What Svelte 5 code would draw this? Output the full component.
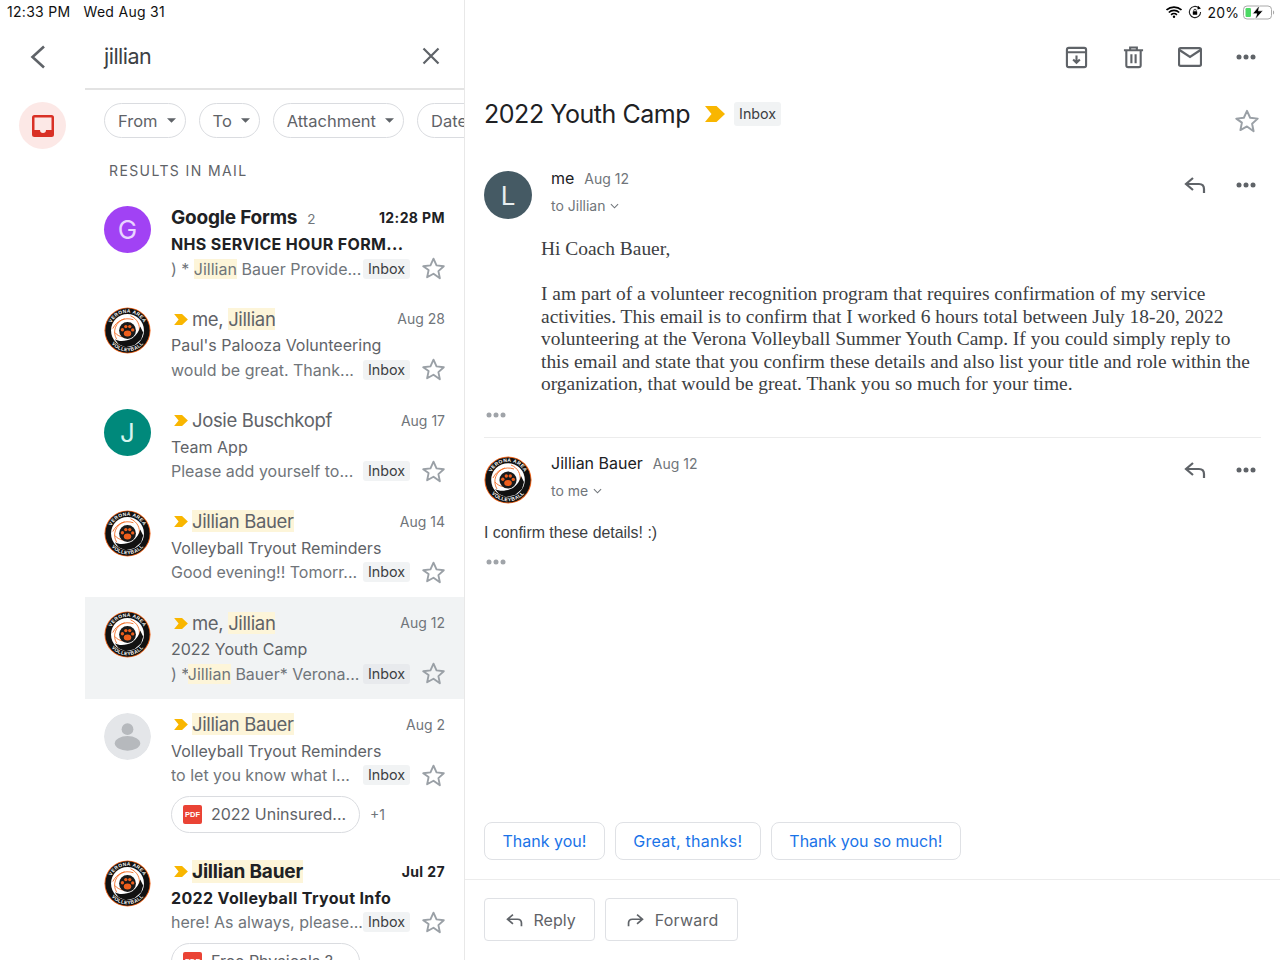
<script>
  const rows = [
    { av: 'g', name: [['Google Forms', 0]], count: '2', date: '12:28 PM', subj: 'NHS SERVICE HOUR FORM...', snip: [[') * ', 0], ['Jillian', 1], [' Bauer Provide...', 0]], bold: true },
    { av: 'logo', imp: true, name: [['me, ', 0], ['Jillian', 1]], date: 'Aug 28', subj: "Paul's Palooza Volunteering", snip: [['would be great. Thank...', 0]] },
    { av: 'j', imp: true, name: [['Josie Buschkopf', 0]], date: 'Aug 17', subj: 'Team App', snip: [['Please add yourself to...', 0]] },
    { av: 'logo', imp: true, name: [['Jillian Bauer', 1]], date: 'Aug 14', subj: 'Volleyball Tryout Reminders', snip: [['Good evening!! Tomorr...', 0]] },
    { av: 'logo', imp: true, sel: true, name: [['me, ', 0], ['Jillian', 1]], date: 'Aug 12', subj: '2022 Youth Camp', snip: [[') *', 0], ['Jillian', 1], [' Bauer* Verona...', 0]] },
    { av: 'person', imp: true, name: [['Jillian Bauer', 1]], date: 'Aug 2', subj: 'Volleyball Tryout Reminders', snip: [['to let you know what I...', 0]], att: '2022 Uninsured...', more: '+1' },
    { av: 'logo', imp: true, bold: true, name: [['Jillian Bauer', 1]], date: 'Jul 27', subj: '2022 Volleyball Tryout Info', snip: [['here! As always, please...', 0]], att: 'Free Physicals ?' }
  ];
  const body = [
    'I am part of a volunteer recognition program that requires confirmation of my service activities. This email is to confirm that I worked 6 hours total between July 18-20, 2022 volunteering at the Verona Volleyball Summer Youth Camp. If you could simply reply to this email and state that you confirm these details and also list your title and role within the organization, that would be great. Thank you so much for your time.'
  ];
</script>

{#snippet logo(uid)}
  <svg class="avatar" viewBox="0 0 48 48" aria-hidden="true">
    <defs>
      <path id={'top' + uid} d="M5.800 24a18.200 18.200 0 0 1 36.400 0" />
      <path id={'bot' + uid} d="M2.800 24a21.200 21.200 0 0 0 42.400 0" />
    </defs>
    <circle cx="24" cy="24" r="23.600" fill="#f26a21" />
    <circle cx="24" cy="24" r="22.600" fill="#111" />
    <circle cx="24" cy="24" r="16.800" fill="#fff" />
    <path d="M9 22c4-8 12-12 21-9M13 33c-5-8-1-18 8-21M27 9c7 3 10 9 9 16M11 26c4 5 11 6 17 3" fill="none" stroke="#f26a21" stroke-width="0.900" />
    <path d="M11 33c5 3 12 2 18-1 4-3 7-7 8-12l3 6-2 7-7 6-9 2-7-3z" fill="#111" />
    <circle cx="24" cy="24" r="8.600" fill="#1a1a1a" />
    <ellipse cx="24" cy="27" rx="3.800" ry="3" fill="#ef5f1c" />
    <circle cx="18.800" cy="23.200" r="1.700" fill="#ef5f1c" />
    <circle cx="22.300" cy="20" r="1.700" fill="#ef5f1c" />
    <circle cx="26.300" cy="20" r="1.700" fill="#ef5f1c" />
    <circle cx="29.300" cy="23.400" r="1.700" fill="#ef5f1c" />
    <text class="ring"><textPath href={'#top' + uid} startOffset="50%">VERONA AREA</textPath></text>
    <text class="ring"><textPath href={'#bot' + uid} startOffset="50%">VOLLEYBALL</textPath></text>
  </svg>
{/snippet}

{#snippet chevron(cls)}
  <svg class={cls} viewBox="0 0 20 16" aria-hidden="true"><path d="M0 0h11.500L20 8l-8.500 8H0l6.500-8z" fill="#f9b600" /></svg>
{/snippet}

{#snippet star(cls)}
  <svg class={cls} viewBox="0 0 24 24" aria-hidden="true"><path d="M12 2.600l2.900 6.400 7 .8-5.200 4.700 1.400 6.900L12 17l-6.100 3.400 1.400-6.900L2.100 9.800l7-.8z" fill="none" stroke="#9aa0a6" stroke-width="1.800" stroke-linejoin="round" /></svg>
{/snippet}

{#snippet dots(cls)}
  <svg class={cls} viewBox="0 0 20 6" aria-hidden="true"><circle cx="3" cy="3" r="2.500" /><circle cx="10" cy="3" r="2.500" /><circle cx="17" cy="3" r="2.500" /></svg>
{/snippet}

{#snippet replyIcon(cls)}
  <svg class={cls} viewBox="0 0 22 18" aria-hidden="true"><path d="M9 2L2 8l7 6M2.500 8H15c3 0 5 2 5 5v4" fill="none" stroke="#5f6368" stroke-width="2.200" /></svg>
{/snippet}

{#snippet caret()}
  <svg class="caret" viewBox="0 0 10 5" aria-hidden="true"><path d="M0 0h10L5 5z" fill="#5f6368" /></svg>
{/snippet}

{#snippet down()}
  <svg class="down" viewBox="0 0 10 6" aria-hidden="true"><path d="M1 1l4 4 4-4" fill="none" stroke="#70757a" stroke-width="1.200" /></svg>
{/snippet}

<div class="page">
  <section class="left">
    <div class="status"><span>12:33 PM</span><span>Wed Aug 31</span></div>
    <div class="columns">
      <aside class="rail">
        <svg class="back" viewBox="0 0 16 24" aria-hidden="true"><path d="M14 1.500L2.500 12 14 22.500" fill="none" stroke="#5f6368" stroke-width="2.600" /></svg>
        <div class="inbox-btn">
          <svg viewBox="0 0 22 22" aria-hidden="true"><path fill-rule="evenodd" d="M2.500 0h17A2.500 2.500 0 0 1 22 2.500v17a2.500 2.500 0 0 1-2.500 2.500h-17A2.500 2.500 0 0 1 0 19.500v-17A2.500 2.500 0 0 1 2.500 0zM2.500 2.500V15h5.500a3 3 0 0 0 6 0h5.500V2.500z" fill="#d93025" /></svg>
        </div>
      </aside>
      <div class="main">
        <div class="search">
          <span class="query">jillian</span>
          <svg class="close" viewBox="0 0 18 18" aria-hidden="true"><path d="M1.500 1.500l15 15M16.500 1.500l-15 15" fill="none" stroke="#5f6368" stroke-width="2.200" /></svg>
        </div>
        <div class="chips">
          <span class="chip">From{@render caret()}</span>
          <span class="chip">To{@render caret()}</span>
          <span class="chip">Attachment{@render caret()}</span>
          <span class="chip">Date{@render caret()}</span>
        </div>
        <div class="label">RESULTS IN MAIL</div>
        <div class="list">
          {#each rows as r, i}
            <article class="row" class:sel={r.sel} class:bold={r.bold}>
              {#if r.av === 'logo'}
                {@render logo(i)}
              {:else if r.av === 'g'}
                <div class="avatar letter purple">G</div>
              {:else if r.av === 'j'}
                <div class="avatar letter green">J</div>
              {:else}
                <svg class="avatar" viewBox="0 0 48 48" aria-hidden="true"><circle cx="24" cy="24" r="24" fill="#e4e6e9" /><circle cx="24" cy="16.500" r="6" fill="#b6b9bd" /><ellipse cx="24" cy="31" rx="13" ry="7.500" fill="#b6b9bd" /></svg>
              {/if}
              <div class="content">
                <div class="l1">
                  {#if r.imp}{@render chevron('imp')}{/if}
                  <span class="name">{#each r.name as p}{#if p[1]}<mark>{p[0]}</mark>{:else}{p[0]}{/if}{/each}</span>
                  {#if r.count}<span class="count">{r.count}</span>{/if}
                  <span class="date">{r.date}</span>
                </div>
                <div class="l2">{r.subj}</div>
                <div class="l3">
                  <span class="snip">{#each r.snip as p}{#if p[1]}<mark>{p[0]}</mark>{:else}{p[0]}{/if}{/each}</span>
                  <span class="badge">Inbox</span>
                  {@render star('star')}
                </div>
                {#if r.att}
                  <div class="attrow">
                    <span class="att"><span class="pdf">PDF</span>{r.att}</span>
                    {#if r.more}<span class="more-count">{r.more}</span>{/if}
                  </div>
                {/if}
              </div>
            </article>
          {/each}
        </div>
      </div>
    </div>
  </section>

  <section class="right">
    <div class="status sys">
      <svg class="wifi" viewBox="0 0 16 12" aria-hidden="true"><path d="M0.500 4a11 11 0 0 1 15 0M2.800 6.500a7.600 7.600 0 0 1 10.400 0M5.100 8.800a4.200 4.200 0 0 1 5.800 0" fill="none" stroke="#000" stroke-width="1.700" /><circle cx="8" cy="10.800" r="1.200" /></svg>
      <svg class="rot" viewBox="0 0 14 14" aria-hidden="true"><path d="M12.600 7A5.600 5.600 0 1 1 10.800 2.900" fill="none" stroke="#222" stroke-width="1.100" /><path d="M10 0.800l3 2.700-3.600 1z" /><rect x="4.800" y="6.300" width="4.400" height="3.400" rx="0.500" /><path d="M5.800 6.300V5.400a1.200 1.200 0 0 1 2.400 0v.9" fill="none" stroke="#000" stroke-width="0.800" /></svg>
      <span class="pct">20%</span>
      <svg class="batt" viewBox="0 0 32 15" aria-hidden="true"><rect x="0.500" y="1" width="28" height="13" rx="3.500" fill="none" stroke="#a9a9a9" /><rect x="2.500" y="3" width="5.500" height="9" rx="1.200" fill="#4cd964" /><path d="M30 5.500c1.500.4 1.500 3.600 0 4z" fill="#a9a9a9" /><path d="M16.500 0.300L9.500 8.800h4.300l-1.800 6 8-9h-4.500z" stroke="#fff" stroke-width="0.700" /></svg>
    </div>
    <div class="toolbar">
      <svg viewBox="0 0 24 24" aria-hidden="true"><path d="M2 6.500V20a2 2 0 0 0 2 2h16a2 2 0 0 0 2-2V6.500M2 6.500V4a2 2 0 0 1 2-2h16a2 2 0 0 1 2 2v2.500zM12 10v7M8.500 14l3.500 3.500 3.500-3.500" fill="none" stroke="#5f6368" stroke-width="2.200" /></svg>
      <svg viewBox="0 0 24 24" aria-hidden="true"><path d="M2 4.500h20M8.500 4V1.500h7V4M4.500 4.500V20a2 2 0 0 0 2 2h11a2 2 0 0 0 2-2V4.500M9.800 8.500v9.500M14.200 8.500v9.500" fill="none" stroke="#5f6368" stroke-width="2.200" /></svg>
      <svg class="wide" viewBox="0 0 24 20" aria-hidden="true"><rect x="1" y="1.200" width="22" height="17.600" rx="1.500" fill="none" stroke="#5f6368" stroke-width="2.200" /><path d="M1.500 3l10.500 7L22.500 3" fill="none" stroke="#5f6368" stroke-width="2.200" /></svg>
      {@render dots('more')}
    </div>
    <div class="subject">
      <h1>2022 Youth Camp</h1>
      {@render chevron('imp-large')}
      <span class="badge large">Inbox</span>
      {@render star('star-large')}
    </div>

    <div class="msg first">
      <div class="avatar letter slate">L</div>
      <div class="who">
        <div class="from"><span class="sender">me</span><span class="when">Aug 12</span></div>
        <div class="to">to Jillian{@render down()}</div>
      </div>
      <div class="actions">{@render replyIcon('reply')}{@render dots('more')}</div>
    </div>
    <div class="serif">
      <p class="hi">Hi Coach Bauer,</p>
      {#each body as para}<p>{para}</p>{/each}
    </div>
    {@render dots('elide')}
    <hr />
    <div class="msg second">
      {@render logo('m')}
      <div class="who">
        <div class="from"><span class="sender">Jillian Bauer</span><span class="when">Aug 12</span></div>
        <div class="to">to me{@render down()}</div>
      </div>
      <div class="actions">{@render replyIcon('reply')}{@render dots('more')}</div>
    </div>
    <p class="plain">I confirm these details! :)</p>
    {@render dots('elide two')}

    <div class="smart">
      <button>Thank you!</button>
      <button class="spaced">Great, thanks!</button>
      <button>Thank you so much!</button>
    </div>
    <div class="foot">
      <button>{@render replyIcon('btn-ico')}Reply</button>
      <button class="spaced"><svg class="btn-ico" viewBox="0 0 22 18" aria-hidden="true"><path d="M13 2l7 6-7 6M19.500 8H7c-3 0-5 2-5 5v4" fill="none" stroke="#5f6368" stroke-width="2.200" /></svg>Forward</button>
    </div>
  </section>
</div>

<style>
  :global(body) { margin: 0; background: #fff; }
  .page { display: flex; width: 1280px; height: 960px; overflow: hidden; font-family: Inter, "Noto Sans", sans-serif; color: #202124; }
  .left { width: 464px; height: 960px; flex: none; display: flex; flex-direction: column; border-right: 1px solid #e8e8e8; overflow: hidden; }
  .right { flex: 1; min-width: 0; display: flex; flex-direction: column; }
  .status { height: 24px; flex: none; display: flex; gap: 13px; padding: 0 0 0 7px; font-size: 14px; letter-spacing: 0.300px; line-height: 23px; color: #111; white-space: nowrap; }
  .status.sys { justify-content: flex-end; align-items: center; gap: 6px; padding: 0 5px 0 0; }
  .pct { letter-spacing: 0.100px; }
  .wifi { width: 16px; height: 12px; }
  .rot { width: 14px; height: 14px; }
  .batt { width: 32px; height: 15px; margin-left: -2px; }
  .columns { flex: 1; min-height: 0; display: flex; }
  .rail { width: 85px; flex: none; display: flex; flex-direction: column; }
  .back { width: 16px; height: 24px; margin: 21px 0 0 30px; }
  .inbox-btn { width: 47px; height: 47px; border-radius: 50%; background: #fce8e6; margin: 33px 0 0 19px; display: flex; align-items: center; justify-content: center; }
  .inbox-btn svg { width: 22px; height: 22px; }
  .main { flex: 1; min-width: 0; display: flex; flex-direction: column; }
  .search { height: 66px; flex: none; box-sizing: border-box; display: flex; align-items: center; justify-content: space-between; padding: 0 24px 0 19px; border-bottom: 2px solid #e3e3e3; }
  .query { font-size: 21.500px; letter-spacing: -0.500px; color: #3c4043; }
  .close { width: 18px; height: 18px; }
  .chips { display: flex; gap: 13px; padding: 13px 0 0 19px; overflow: hidden; flex: none; }
  .chip { flex: none; height: 35px; box-sizing: border-box; border: 1.500px solid #dadce0; border-radius: 18px; display: flex; align-items: center; gap: 9px; padding: 0 9px 0 13px; font-size: 16.500px; color: #5f6368; }
  .caret { width: 9px; height: 5px; }
  .label { padding: 24px 0 0 24px; height: 54px; box-sizing: border-box; flex: none; font-size: 14px; line-height: 17px; letter-spacing: 1.400px; color: #5f6368; }
  .list { flex: 1; min-height: 0; }
  .row { display: flex; gap: 20px; padding: 14px 19px 13.330px; }
  .row.sel { background: #f1f3f4; }
  .avatar { width: 47px; height: 47px; flex: none; border-radius: 50%; }
  .letter { display: flex; align-items: center; justify-content: center; color: #e8d5ff; font-size: 26px; }
  .purple { background: #a142f4; }
  .green { background: #00897b; color: #d6f5ef; }
  .slate { background: #455a64; color: #e8eef0; }
  .ring { font: 800 5px "Liberation Sans", sans-serif; fill: #fff; text-anchor: middle; letter-spacing: 0.400px; }
  .content { flex: 1; min-width: 0; }
  .l1 { height: 23px; display: flex; align-items: center; white-space: nowrap; }
  .imp { width: 14px; height: 11px; margin: 1px 4px 0 3px; flex: none; }
  .name { font-size: 18.500px; letter-spacing: -0.350px; color: #5f6368; }
  mark { background: #fdf5d9; color: inherit; }
  .count { font-size: 13.500px; color: #70757a; margin: 3px 0 0 10px; }
  .date { margin-left: auto; font-size: 14px; color: #70757a; }
  .l2 { height: 28px; line-height: 30px; font-size: 16px; color: #5f6368; white-space: nowrap; }
  .l3 { height: 23px; display: flex; align-items: center; white-space: nowrap; }
  .snip { font-size: 16px; color: #70757a; flex: 1; min-width: 0; overflow: hidden; }
  .badge { flex: none; width: 47px; height: 20px; box-sizing: border-box; text-align: center; line-height: 20px; background: #f1f3f4; border-radius: 3px; font-size: 14.300px; color: #3c4043; }
  .sel .badge { background: #e8eaed; }
  .star { width: 25px; height: 25px; margin: 0 -1px 0 11px; flex: none; }
  .bold .name { font-weight: 700; color: #202124; font-size: 19px; letter-spacing: -0.200px; }
  .bold .date { font-weight: 700; color: #202124; letter-spacing: 0.400px; }
  .bold .l2 { font-weight: 700; color: #202124; letter-spacing: 0.350px; }
  .attrow { display: flex; align-items: center; gap: 10px; margin-top: 9px; margin-bottom: -0.300px; }
  .att { width: 189px; height: 37px; box-sizing: border-box; border: 1.500px solid #dadce0; border-radius: 19px; display: flex; align-items: center; gap: 9px; padding: 0 11px; font-size: 16px; color: #5f6368; white-space: nowrap; }
  .pdf { width: 19px; height: 19px; border-radius: 2px; background: #ea4335; color: #fff; font: 700 7.500px/19px "Liberation Sans", sans-serif; text-align: center; flex: none; }
  .more-count { font-size: 14px; color: #70757a; }
  .toolbar { height: 66px; flex: none; display: flex; justify-content: flex-end; align-items: center; gap: 34px; padding-right: 24px; }
  .toolbar svg { width: 23px; height: 23px; }
  .toolbar .wide { width: 24px; height: 20px; margin-left: -1px; }
  svg.more, .toolbar svg.more { width: 20px; height: 6px; fill: #5f6368; }
  .subject { display: flex; align-items: center; padding: 0 20px 0 19px; height: 48px; }
  h1 { margin: 0; font-size: 25px; font-weight: 400; letter-spacing: -0.450px; color: #202124; }
  .imp-large { width: 20px; height: 16px; margin-left: 15px; flex: none; }
  .badge.large { height: 24px; line-height: 24px; font-size: 14.300px; margin-left: 9px; }
  .star-large { width: 26px; height: 26px; margin: 13px 0 0 auto; }
  .msg { display: flex; gap: 19px; padding: 0 24px 0 19px; }
  .msg .avatar { width: 48px; height: 48px; }
  .msg.first { margin-top: 33px; }
  .msg.second { margin-top: 18px; }
  .who { flex: 1; margin-top: -2px; }
  .from { height: 18px; display: flex; align-items: center; gap: 10px; }
  .sender { font-size: 16px; color: #202124; }
  .when { font-size: 14px; color: #70757a; }
  .to { display: flex; align-items: center; gap: 5px; margin-top: 10px; font-size: 14px; line-height: 18px; color: #70757a; }
  .down { width: 9px; height: 6px; }
  .actions { display: flex; align-items: center; gap: 30px; height: 18px; padding-top: 5px; }
  .reply { width: 22px; height: 18px; }
  .serif { margin: 19px 0 0 76px; width: 712px; font: 19.450px/22.500px "Liberation Serif", serif; color: #3c4043; }
  .serif p { margin: 0; }
  .serif .hi { margin-bottom: 22.500px; }
  svg.elide { width: 20px; height: 6px; margin: 16px 0 0 21px; fill: #a0a4a9; flex: none; }
  hr { height: 1.500px; border: 0; background: #ececec; margin: 19px 19px 0 19px; width: 777px; flex: none; }
  .plain { margin: 19px 0 0 19px; font: 15.900px/20px "Liberation Sans", sans-serif; color: #3c4043; }
  .smart { margin-top: auto; display: flex; gap: 10px; padding-left: 19px; }
  button { font: inherit; background: #fff; cursor: pointer; }
  .smart button { height: 38px; padding: 0 17.500px; border: 1.500px solid #dfe1e5; border-radius: 8px; font-size: 16px; color: #1a73e8; }
  .smart .spaced { letter-spacing: 0.250px; }
  .foot { margin-top: 19px; border-top: 1.500px solid #ececec; display: flex; gap: 10px; padding: 18px 0 19px 19px; }
  .foot button { height: 43px; padding: 0 18.500px 0 20.500px; display: flex; align-items: center; gap: 11px; border: 1.500px solid #dfe1e5; border-radius: 4px; font-size: 16px; color: #5f6368; }
  .foot .spaced { letter-spacing: 0.250px; }
  .btn-ico { width: 17px; height: 14px; }
</style>
